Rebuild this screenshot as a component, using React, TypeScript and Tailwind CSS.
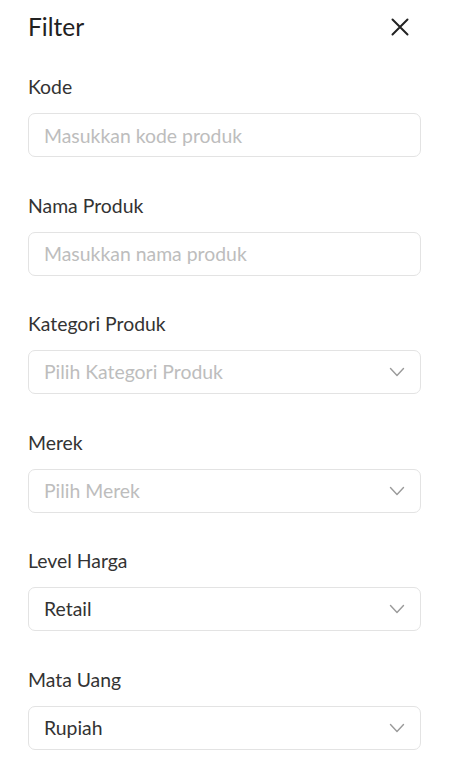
import React from 'react';

const Chevron = () => (
  <svg width="16" height="10" viewBox="0 0 16 10" fill="none" className="shrink-0">
    <path d="M1.5 1.5L8 8.5L14.5 1.5" stroke="#9a9a9a" strokeWidth="1.4" strokeLinecap="round" strokeLinejoin="round" />
  </svg>
);

const TextField = ({ label, placeholder }: { label: string; placeholder: string }) => (
  <div className="pb-[36.5px]">
    <label className="block text-[19.4px] leading-[24px] text-[#333333]">{label}</label>
    <input
      type="text"
      placeholder={placeholder}
      className="mt-[14px] h-[44px] w-full rounded-[7px] border border-[#e3e3e3] px-[15px] text-[19.4px] text-[#333333] outline-none placeholder:text-[#bdbdbd]"
    />
  </div>
);

const SelectField = ({ label, value, placeholder }: { label: string; value?: string; placeholder: string }) => (
  <div className="pb-[36.5px]">
    <label className="block text-[19.4px] leading-[24px] text-[#333333]">{label}</label>
    <div className="mt-[14px] flex h-[44px] w-full items-center justify-between rounded-[7px] border border-[#e3e3e3] pl-[15px] pr-[15px]">
      <span className={value ? 'text-[19.4px] text-[#333333]' : 'text-[19.4px] text-[#bdbdbd]'}>{value ?? placeholder}</span>
      <Chevron />
    </div>
  </div>
);

export default function App() {
  return (
    <div className="min-h-screen bg-white px-7 font-['Lato',sans-serif]">
      <div className="flex h-[54px] items-center justify-between">
        <h1 className="text-[24.5px] text-[#222222]">Filter</h1>
        <button className="mr-[12px] text-[#222222]">
          <svg width="18" height="18" viewBox="0 0 18 18" fill="none">
            <path d="M1.5 1.5L16.5 16.5M16.5 1.5L1.5 16.5" stroke="#222222" strokeWidth="2" strokeLinecap="round" />
          </svg>
        </button>
      </div>
      <div className="pt-[21px]">
        <TextField label="Kode" placeholder="Masukkan kode produk" />
        <TextField label="Nama Produk" placeholder="Masukkan nama produk" />
        <SelectField label="Kategori Produk" placeholder="Pilih Kategori Produk" />
        <SelectField label="Merek" placeholder="Pilih Merek" />
        <SelectField label="Level Harga" value="Retail" placeholder="" />
        <SelectField label="Mata Uang" value="Rupiah" placeholder="" />
      </div>
    </div>
  );
}
